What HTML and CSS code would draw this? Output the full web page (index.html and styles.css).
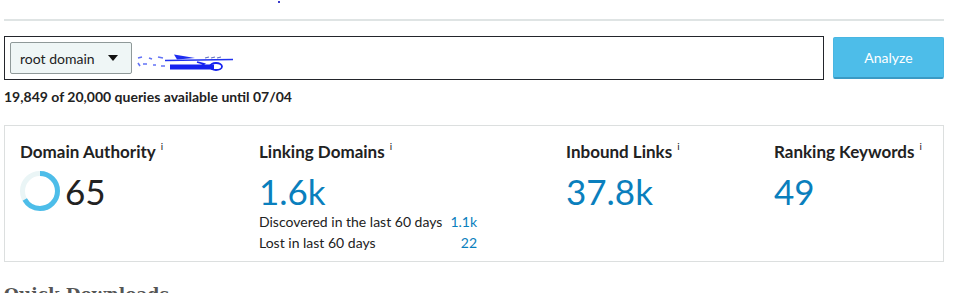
FILE: index.html
```html
<!DOCTYPE html>
<html>
<head>
<meta charset="utf-8">
<link rel="stylesheet" href="styles.css">
</head>
<body>
<div class="page">
  <div class="topbar"><span class="dot"></span></div>
  <div class="search-row">
    <div class="search-box">
      <div class="select">root domain <span class="caret"></span></div>
      <svg class="scribble" width="96" height="24" viewBox="0 0 96 24">
        <path d="M1 11 L5 10 M1 16 L3 19 M6 17 L10 17 M12 11 L15 12 M16 18 L19 18 M21 10 L26 11 M24 19 L28 19" stroke="#3b4ff2" stroke-width="1.6" fill="none" opacity="0.8"/>
        <rect x="33" y="17.5" width="44" height="5" fill="#1522ef"/>
        <path d="M37 7.5 L58 11 L40 12.5 Z" fill="#1d2cf0"/>
        <path d="M28 13.5 L96 12.5" stroke="#2233ee" stroke-width="1.5" fill="none"/>
        <path d="M68 11 L72 10 M74 11 L78 10 M80 11 L84 10" stroke="#6070c0" stroke-width="1.2" fill="none"/>
        <ellipse cx="79" cy="19.5" rx="6" ry="3.5" stroke="#1522ef" stroke-width="1.8" fill="none"/>
        <path d="M60 15 L67 17 L62 21" stroke="#1522ef" stroke-width="1.8" fill="none"/>
      </svg>
    </div>
    <button class="analyze">Analyze</button>
  </div>
  <div class="quota">19,849 of 20,000 queries available until 07/04</div>

  <div class="card">
    <div class="metric m1">
      <div class="label">Domain Authority<sup>i</sup></div>
      <div class="da">
        <svg class="donut" width="40" height="40" viewBox="0 0 40 40">
          <circle cx="20" cy="20" r="17.5" stroke="#eaf5f6" stroke-width="5" fill="none"/>
          <circle cx="20" cy="20" r="17.5" stroke="#4dbde9" stroke-width="5" fill="none"
            stroke-dasharray="73 110" transform="rotate(-90 20 20)"/>
        </svg>
        <span class="big dark">65</span>
      </div>
    </div>
    <div class="metric m2">
      <div class="label">Linking Domains<sup>i</sup></div>
      <div class="big">1.6k</div>
      <div class="sub">
        <span>Discovered in the last 60 days</span><span class="val">1.1k</span>
        <span>Lost in last 60 days</span><span class="val">22</span>
      </div>
    </div>
    <div class="metric m3">
      <div class="label">Inbound Links<sup>i</sup></div>
      <div class="big">37.8k</div>
    </div>
    <div class="metric m4">
      <div class="label">Ranking Keywords<sup>i</sup></div>
      <div class="big">49</div>
    </div>
  </div>

  <h2 class="section">Quick Downloads</h2>
</div>
</body>
</html>
```

FILE: styles.css
```css
* { box-sizing: border-box; }
html, body { margin: 0; padding: 0; background: #fff; }
body { font-family: Lato, "Open Sans", sans-serif; color: #222; overflow: hidden; }
.page { padding: 0 12px 0 4px; width: 956px; }
.topbar {
  position: relative;
  height: 21px;
  border-bottom: 2px solid #dfe4e4;
}
.dot {
  position: absolute;
  left: 274px; top: 1px;
  width: 2px; height: 2px;
  background: #3a3acc;
}
.search-row {
  display: flex;
  align-items: center;
  gap: 9px;
  margin-top: 15px;
}
.search-box {
  width: 820px;
  height: 44px;
  border: 1px solid #23252b;
  display: flex;
  align-items: center;
  padding-left: 5px;
  gap: 5px;
}
.select {
  width: 122px;
  height: 32px;
  background: #eff6f6;
  border: 1px solid #8f9999;
  border-radius: 2px;
  font-size: 14px;
  color: #222;
  display: flex;
  align-items: center;
  padding-left: 9px;
  gap: 13px;
}
.caret {
  width: 0; height: 0;
  border-left: 5px solid transparent;
  border-right: 5px solid transparent;
  border-top: 6px solid #111;
}
.scribble { margin-top: 2px; }
.analyze {
  width: 111px;
  height: 42px;
  background: #4dbde9;
  border: 1px solid #49b6e2;
  border-bottom: 2px solid #3a9ac4;
  border-radius: 2px;
  color: #fff;
  font-family: Lato, sans-serif;
  font-size: 14px;
  padding: 0;
}
.quota {
  font-size: 14px;
  font-weight: 700;
  line-height: 17px;
  margin-top: 8px;
  color: #222;
}
.card {
  margin-top: 20px;
  width: 940px;
  height: 137px;
  border: 1px solid #dcdfdf;
  display: flex;
  padding: 16px 19px 0 15px;
}
.metric { flex: none; }
.m1 { width: 239px; }
.m2 { width: 307px; }
.m3 { width: 208px; }
.m4 { flex: 1; }
.label {
  font-size: 17px;
  font-weight: 700;
  color: #222;
  line-height: 20px;
}
.label sup {
  font-size: 10px;
  font-weight: 400;
  margin-left: 5px;
  vertical-align: 8px;
  line-height: 0;
}
.big {
  font-size: 35px;
  color: #0a7fbd;
  line-height: 40px;
  margin-top: 9px;
}
.big.dark { color: #222; margin-top: 0; margin-left: 5px; }
.da {
  display: flex;
  align-items: center;
  margin-top: 9px;
}
.sub {
  display: inline-grid;
  grid-template-columns: auto auto;
  column-gap: 8px;
  font-size: 14px;
  line-height: 21px;
  margin-top: 0;
}
.sub .val { color: #0a7fbd; text-align: right; }
.section {
  font-family: "DejaVu Serif", serif;
  font-size: 17px;
  font-weight: 700;
  line-height: 20px;
  color: #555;
  margin: 22px 0 0 0;
}
```
